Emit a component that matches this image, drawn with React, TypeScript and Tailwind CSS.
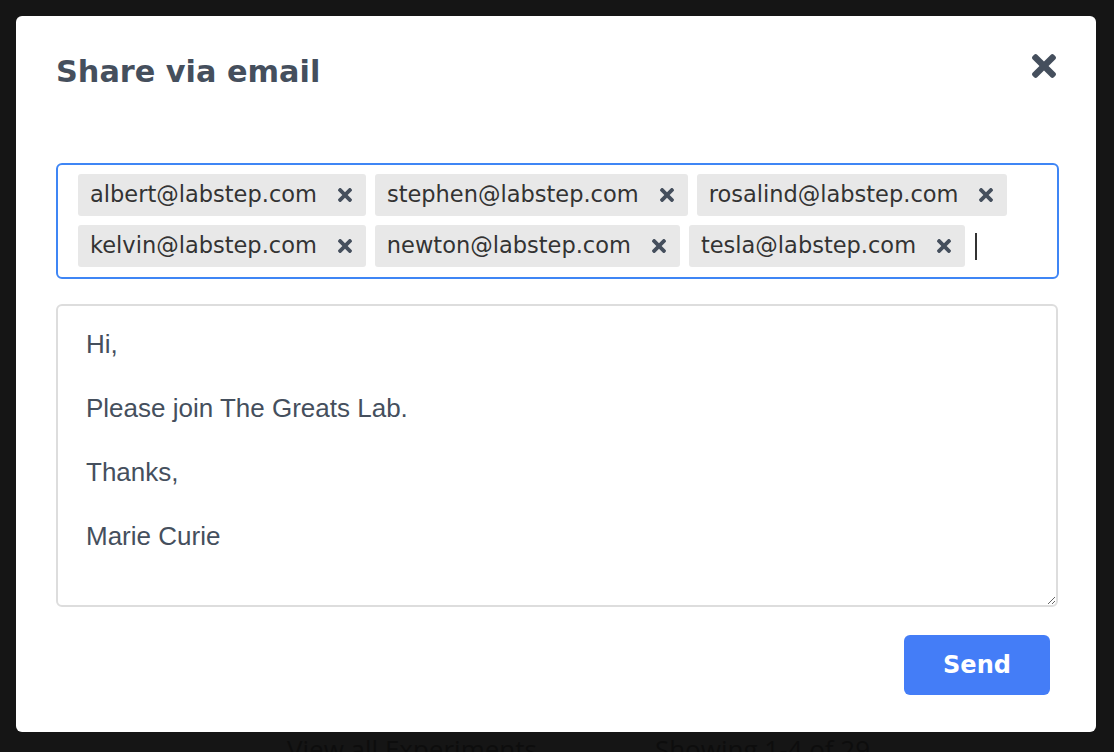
const emails = [
  ["albert@labstep.com", "stephen@labstep.com", "rosalind@labstep.com"],
  ["kelvin@labstep.com", "newton@labstep.com", "tesla@labstep.com"],
];

const message = "Hi,\n\nPlease join The Greats Lab.\n\nThanks,\n\nMarie Curie";

function TimesIcon({ className }: { className?: string }) {
  return (
    <svg viewBox="0 80 352 352" className={className} fill="currentColor" aria-hidden="true">
      <path d="M242.72 256l100.07-100.07c12.28-12.28 12.28-32.19 0-44.48l-22.24-22.24c-12.28-12.28-32.19-12.28-44.48 0L176 189.28 75.930 89.21c-12.28-12.28-32.19-12.28-44.48 0L9.21 111.45c-12.28 12.28-12.28 32.19 0 44.48L109.28 256 9.21 356.07c-12.28 12.28-12.28 32.19 0 44.48l22.24 22.24c12.28 12.28 32.2 12.28 44.48 0L176 322.72l100.07 100.07c12.28 12.28 32.2 12.28 44.48 0l22.24-22.24c12.28-12.28 12.28-32.19 0-44.48L242.72 256z" />
    </svg>
  );
}

function Chip({ email }: { email: string }) {
  return (
    <div className="flex h-[42px] items-center rounded-[3px] bg-[#e8e8e8] pl-3 pr-[14px]">
      <span className="text-[22.5px] text-[#333333]">{email}</span>
      <TimesIcon className="ml-[21px] h-[14px] w-[14px] text-[#454f5d]" />
    </div>
  );
}

export default function App() {
  return (
    <div className="relative h-[752px] w-full overflow-hidden bg-[#151515] font-['DejaVu_Sans',sans-serif]">
      {/* page behind the overlay */}
      <div className="flex h-full flex-col justify-end">
        <div className="flex h-[20px] items-start gap-[118px] pl-[287px] font-['Open_Sans',sans-serif] text-[26px] leading-[26px] text-[#0d0d0d]">
          <span className="mt-1">View all Experiments</span>
          <span className="mt-1">Showing 1-4 of 29</span>
        </div>
      </div>

      {/* modal */}
      <div className="absolute inset-0 pb-5 pl-4 pr-[18px] pt-4">
        <div className="flex h-[716px] flex-col rounded-md bg-white px-10 pt-[36px]">
          <div className="flex items-start justify-between">
            <h1 className="text-[30.3px] font-bold leading-[40px] text-[#454f5d]">Share via email</h1>
            <button className="mt-[2px]">
              <TimesIcon className="h-[24px] w-[24px] text-[#454f5d]" />
            </button>
          </div>

          <div className="mr-[-3px] mt-[71px] flex flex-col gap-[9px] rounded-md border-2 border-[#3f86f5] px-5 pb-[10px] pt-[9px]">
            {emails.map((row, i) => (
              <div key={i} className="flex items-center gap-[9px]">
                {row.map((e) => (
                  <Chip key={e} email={e} />
                ))}
                {i === 1 && <span className="ml-[1px] h-[27px] w-[2px] bg-[#333333]" />}
              </div>
            ))}
          </div>

          <textarea
            readOnly
            value={message}
            className="mr-[-2px] mt-[25px] h-[303px] resize-y rounded-md border-2 border-[#dddddd] px-[28px] pt-[22px] font-['Liberation_Sans',sans-serif] text-[26px] leading-[32px] text-[#454f5d] outline-none"
          />

          <div className="mt-[28px] flex justify-end">
            <button className="mr-[6px] h-[60px] w-[146px] rounded-md bg-[#447df7] text-[24px] font-bold text-white">
              Send
            </button>
          </div>
        </div>
      </div>
    </div>
  );
}
